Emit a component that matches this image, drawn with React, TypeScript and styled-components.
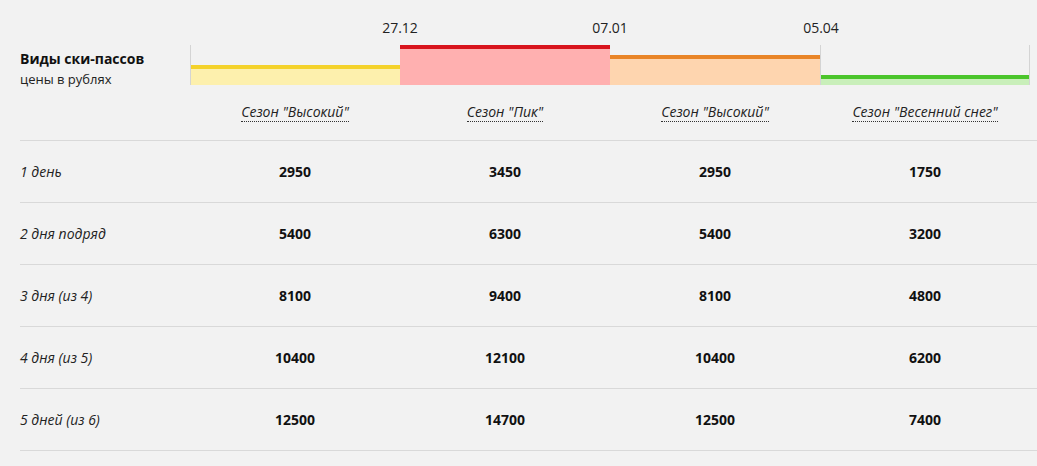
import styled, { createGlobalStyle } from "styled-components";

const GlobalStyle = createGlobalStyle`
  body {
    margin: 0;
    background: #f2f2f2;
    font-family: "Open Sans", "Noto Sans", sans-serif;
    color: #222;
  }
`;

type Season = {
  name: string;
  height: number;
  line: string;
  fill: string;
  start?: string;
};

const seasons: Season[] = [
  { name: 'Сезон "Высокий"', height: 20, line: "#f4d22a", fill: "#fdf0ad" },
  { name: 'Сезон "Пик"', height: 40, line: "#d8141d", fill: "#ffb0b0", start: "27.12" },
  { name: 'Сезон "Высокий"', height: 30, line: "#e98528", fill: "#fed5af", start: "07.01" },
  { name: 'Сезон "Весенний снег"', height: 10, line: "#4bc52b", fill: "#c9efba", start: "05.04" },
];

const prices: { label: string; values: number[] }[] = [
  { label: "1 день", values: [2950, 3450, 2950, 1750] },
  { label: "2 дня подряд", values: [5400, 6300, 5400, 3200] },
  { label: "3 дня (из 4)", values: [8100, 9400, 8100, 4800] },
  { label: "4 дня (из 5)", values: [10400, 12100, 10400, 6200] },
  { label: "5 дней (из 6)", values: [12500, 14700, 12500, 7400] },
];

function App() {
  return (
    <Page>
      <GlobalStyle />
      <ChartRow>
        <Title>
          <strong>Виды ски-пассов</strong>
          <span>цены в рублях</span>
        </Title>
        {seasons.map((s, i) => (
          <Segment key={i} $first={i === 0} $last={i === seasons.length - 1}>
            {s.start && <DateLabel>{s.start}</DateLabel>}
            <Bar $line={s.line} $fill={s.fill} style={{ height: s.height }} />
          </Segment>
        ))}
      </ChartRow>
      <HeadRow>
        <span />
        {seasons.map((s, i) => (
          <HeadCell key={i}>
            <SeasonName>{s.name}</SeasonName>
          </HeadCell>
        ))}
      </HeadRow>
      {prices.map((p) => (
        <PriceRow key={p.label}>
          <RowLabel>{p.label}</RowLabel>
          {p.values.map((v, i) => (
            <Price key={i}>{v}</Price>
          ))}
        </PriceRow>
      ))}
    </Page>
  );
}

const Page = styled.div`
  padding: 45px 0 16px 20px;
  font-size: 14px;
`;

const grid = `
  display: grid;
  grid-template-columns: 170px repeat(4, 210px) 1fr;
`;

const ChartRow = styled.div`
  ${grid}
  grid-template-rows: 40px;
  height: 40px;
`;

const Title = styled.div`
  display: flex;
  flex-direction: column;
  padding-top: 3px;
  line-height: 21px;
  white-space: nowrap;

  strong {
    font-weight: 700;
    color: #111;
  }
  span {
    font-size: 13px;
    color: #222;
  }
`;

const Segment = styled.div<{ $first?: boolean; $last?: boolean }>`
  position: relative;
  display: flex;
  flex-direction: column;
  justify-content: flex-end;
  border-left: ${(p) => (p.$first || p.$last ? "1px solid #d4d4d4" : "none")};
  border-right: ${(p) => (p.$last ? "1px solid #d4d4d4" : "none")};
`;

const DateLabel = styled.span`
  position: absolute;
  top: -26px;
  left: 0;
  transform: translateX(-50%);
  line-height: 18px;
  color: #222;
`;

const Bar = styled.div<{ $line: string; $fill: string }>`
  box-sizing: border-box;
  border-top: 4px solid ${(p) => p.$line};
  background: ${(p) => p.$fill};
`;

const HeadRow = styled.div`
  ${grid}
  padding: 18px 0 18px;
  border-bottom: 1px solid #d9d9d9;
  line-height: 18px;
`;

const HeadCell = styled.div`
  display: flex;
  justify-content: center;
  align-items: flex-start;
`;

const SeasonName = styled.span`
  font-style: italic;
  color: #222;
  border-bottom: 1px dotted #333;
  line-height: 18px;
`;

const PriceRow = styled.div`
  ${grid}
  height: 61px;
  align-items: center;
  border-bottom: 1px solid #d9d9d9;
`;

const RowLabel = styled.span`
  font-style: italic;
  color: #222;
`;

const Price = styled.span`
  text-align: center;
  font-weight: 700;
  color: #111;
`;

export default App;
